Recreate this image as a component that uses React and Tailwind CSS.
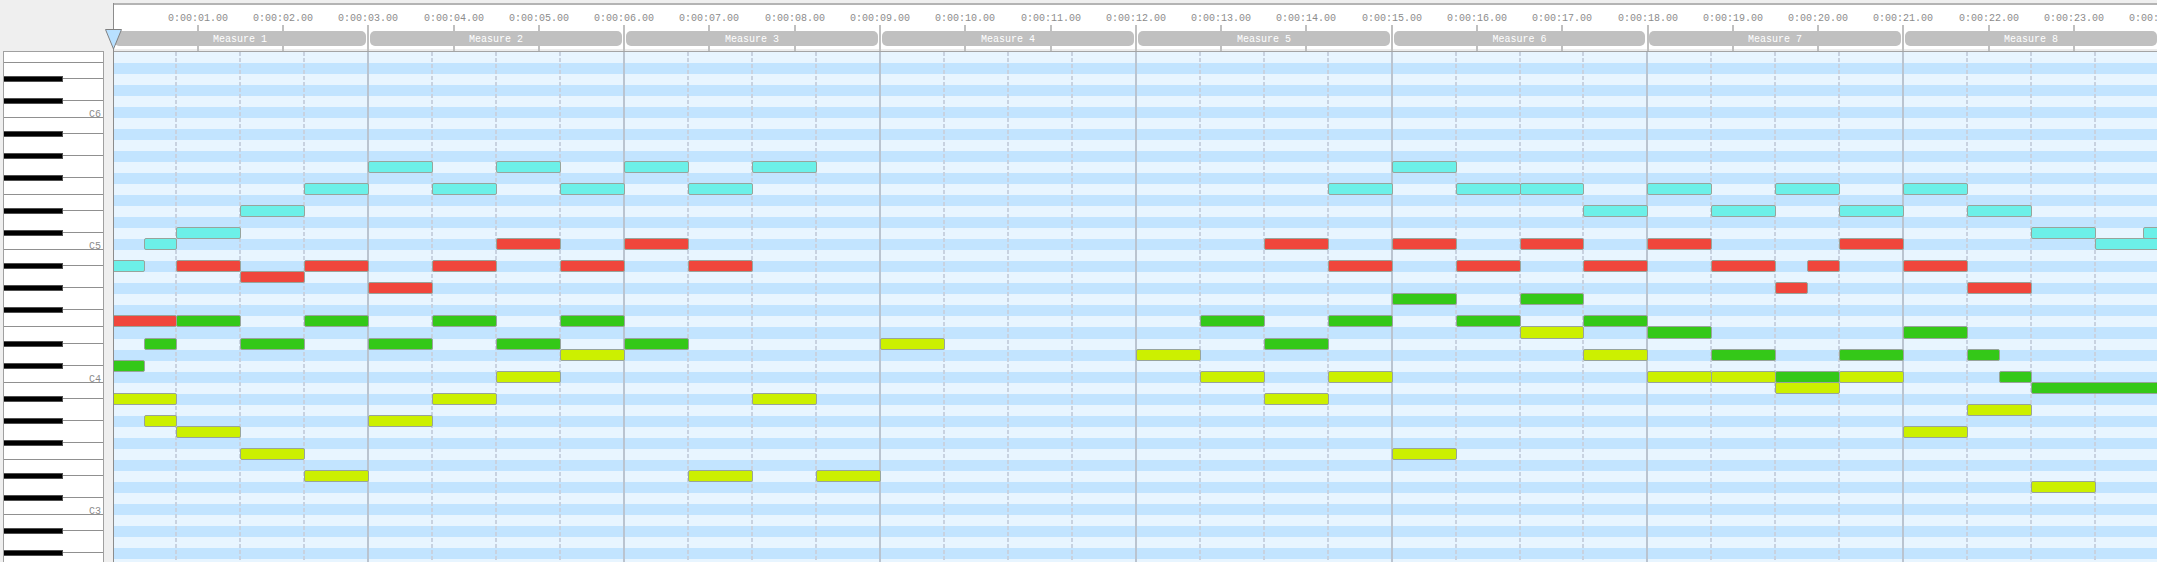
const ROWS = Array.from({ length: 48 }, (_, i) => i);
// Pitch class of each row, going down from the F at the top of the view.
const PITCHES = ['F', 'E', 'D#', 'D', 'C#', 'C', 'B', 'A#', 'A', 'G#', 'G', 'F#'];
const pitchOf = (i) => PITCHES[i % 12];
const rowHeight = (i) => (i === 25 ? 'h-[12px]' : 'h-[11px]');
const rowTop = (i) => 11 * i - 1 + (i > 25 ? 1 : 0);
const beatX = (b) => 64 * b - 2 - (b >= 23 ? 1 : 0);
const secondX = (s) => Math.ceil((1791 * s) / 21) - 2;

const COLORS = {
  c: 'bg-[#6cf0e8]',
  r: 'bg-[#f0463c]',
  g: 'bg-[#34c818]',
  y: 'bg-[#ccf000]',
};

// [voice, row, start beat, length in beats]
const NOTES = [
  ['c', 19, 0, 0.5], ['c', 17, 0.5, 0.5], ['c', 16, 1, 1], ['c', 14, 2, 1], ['c', 12, 3, 1],
  ['c', 10, 4, 1], ['c', 12, 5, 1], ['c', 10, 6, 1], ['c', 12, 7, 1], ['c', 10, 8, 1],
  ['c', 12, 9, 1], ['c', 10, 10, 1], ['c', 12, 19, 1], ['c', 10, 20, 1], ['c', 12, 21, 1],
  ['c', 12, 22, 1], ['c', 14, 23, 1], ['c', 12, 24, 1], ['c', 14, 25, 1], ['c', 12, 26, 1],
  ['c', 14, 27, 1], ['c', 12, 28, 1], ['c', 14, 29, 1], ['c', 16, 30, 1], ['c', 16, 31.75, 1],
  ['c', 17, 31, 1.5],
  ['r', 24, 0, 1], ['r', 19, 1, 1], ['r', 20, 2, 1], ['r', 19, 3, 1], ['r', 21, 4, 1],
  ['r', 19, 5, 1], ['r', 17, 6, 1], ['r', 19, 7, 1], ['r', 17, 8, 1], ['r', 19, 9, 1],
  ['r', 17, 18, 1], ['r', 19, 19, 1], ['r', 17, 20, 1], ['r', 19, 21, 1], ['r', 17, 22, 1],
  ['r', 19, 23, 1], ['r', 17, 24, 1], ['r', 19, 25, 1], ['r', 21, 26, 0.5], ['r', 19, 26.5, 0.5],
  ['r', 17, 27, 1], ['r', 19, 28, 1], ['r', 21, 29, 1],
  ['y', 31, 0, 1], ['y', 33, 0.5, 0.5], ['y', 34, 1, 1], ['y', 36, 2, 1], ['y', 38, 3, 1],
  ['y', 33, 4, 1], ['y', 31, 5, 1], ['y', 29, 6, 1], ['y', 27, 7, 1], ['y', 38, 9, 1],
  ['y', 31, 10, 1], ['y', 38, 11, 1], ['y', 26, 12, 1], ['y', 27, 16, 1], ['y', 29, 17, 1],
  ['y', 31, 18, 1], ['y', 29, 19, 1], ['y', 36, 20, 1], ['y', 25, 22, 1], ['y', 27, 23, 1],
  ['y', 29, 24, 1], ['y', 29, 25, 1], ['y', 30, 26, 1], ['y', 29, 27, 1], ['y', 34, 28, 1],
  ['y', 32, 29, 1], ['y', 39, 30, 1],
  ['g', 28, 0, 0.5], ['g', 26, 0.5, 0.5], ['g', 24, 1, 1], ['g', 26, 2, 1], ['g', 24, 3, 1],
  ['g', 26, 4, 1], ['g', 24, 5, 1], ['g', 26, 6, 1], ['g', 24, 7, 1], ['g', 26, 8, 1],
  ['g', 24, 17, 1], ['g', 26, 18, 1], ['g', 24, 19, 1], ['g', 22, 20, 1], ['g', 24, 21, 1],
  ['g', 22, 22, 1], ['g', 24, 23, 1], ['g', 25, 24, 1], ['g', 27, 25, 1], ['g', 29, 26, 1],
  ['g', 27, 27, 1], ['g', 25, 28, 1], ['g', 27, 29, 0.5], ['g', 29, 29.5, 0.5], ['g', 30, 30, 3],
];

const SECONDS = Array.from({ length: 24 }, (_, i) => i + 1);
const timeLabel = (s) => `0:00:${String(s).padStart(2, '0')}.00`;

function Ruler() {
  return (
    <header className="relative h-[49px] shrink-0 border-t-2 border-b border-t-[#b4b4b4] border-b-[#a4a4a4] bg-white">
      <div className="absolute inset-x-0 bottom-0 h-[2px] bg-[#ececec]" />
      {SECONDS.map((s) => (
        <time
          key={s}
          className="absolute top-[8px] -translate-x-1/2 text-[10px] leading-[12px] whitespace-nowrap text-[#8c8c8c]"
          style={{ left: secondX(s) }}
        >
          {timeLabel(s)}
        </time>
      ))}
      {SECONDS.map((s) => (
        <div key={s} className="absolute top-[20px] bottom-0 w-[2px] bg-[#c0c0c0]" style={{ left: secondX(s) - 1 }} />
      ))}
      {Array.from({ length: 8 }, (_, m) => (
        <div
          key={m}
          className="absolute top-[26px] flex h-[15px] justify-center rounded-[5px] bg-[#c0c0c0] text-[10px] leading-[17px] text-white"
          style={{ left: beatX(4 * m) + 2, width: beatX(4 * m + 4) - beatX(4 * m) - 4 }}
        >
          Measure {m + 1}
        </div>
      ))}
    </header>
  );
}

function Keyboard() {
  return (
    <aside aria-label="Keyboard" className="mt-[51px] ml-[3px] flex w-[101px] shrink-0 flex-col overflow-hidden border-x border-t border-[#a0a0a0] bg-white">
      {ROWS.map((i) => {
        const p = pitchOf(i);
        if (p.endsWith('#')) {
          return (
            <div key={i} className={`flex shrink-0 items-start pt-[2px] ${rowHeight(i)}`}>
              <div className="h-[6px] w-[59px] border-y border-r border-[#505050] bg-black" />
              <div className="mt-[2px] h-px grow bg-[#909090]" />
            </div>
          );
        }
        const edge = p === 'C' || p === 'F' ? 'border-b border-[#909090]' : '';
        return (
          <div key={i} className={`flex shrink-0 items-end justify-end pr-[2px] ${edge} ${rowHeight(i)}`}>
            {p === 'C' && <span className="text-[10px] leading-[4px] text-[#8c8c8c]">C{6 - (i - 5) / 12}</span>}
          </div>
        );
      })}
    </aside>
  );
}

function Roll() {
  return (
    <main className="relative min-h-0 grow overflow-hidden">
      {ROWS.map((i) => (
        <div key={i} className={`${rowHeight(i)} ${i % 2 ? 'bg-[#c2e4ff]' : 'bg-[#e8f5ff]'}`} />
      ))}
      {Array.from({ length: 32 }, (_, b) => b + 1).map((b) => (
        <div
          key={b}
          className={
            b % 4
              ? 'absolute inset-y-0 w-[2px] bg-[repeating-linear-gradient(to_bottom,#c8d2e0_0px,#c8d2e0_4px,transparent_4px,transparent_6px)]'
              : 'absolute inset-y-0 w-[2px] bg-[#bac4d0]'
          }
          style={{ left: beatX(b) - 1 }}
        />
      ))}
      {NOTES.map(([voice, row, start, length], i) => (
        <div
          key={i}
          className={`absolute rounded-[2px] border border-[#98a49c] ${COLORS[voice]} ${row === 25 ? 'h-[13px]' : 'h-[12px]'}`}
          style={{ left: beatX(start), top: rowTop(row), width: beatX(start + length) - beatX(start) + 1 }}
        />
      ))}
    </main>
  );
}

export default function App() {
  return (
    <div className="flex h-screen overflow-hidden bg-[#efefef] font-['Liberation_Mono',monospace]">
      <Keyboard />
      <div className="relative ml-[9px] flex min-w-0 grow flex-col pt-[3px]">
        <div className="flex min-h-0 grow flex-col overflow-hidden border-l border-[#8c8c8c]">
          <Ruler />
          <Roll />
        </div>
        <svg className="absolute top-[28px] -left-[8px] h-[23px] w-[17px]" viewBox="0 0 17 23">
          <path d="M0.5 1.5H16.5L8.5 21Z" fill="#b8e0ff" stroke="#808080" />
        </svg>
      </div>
    </div>
  );
}
